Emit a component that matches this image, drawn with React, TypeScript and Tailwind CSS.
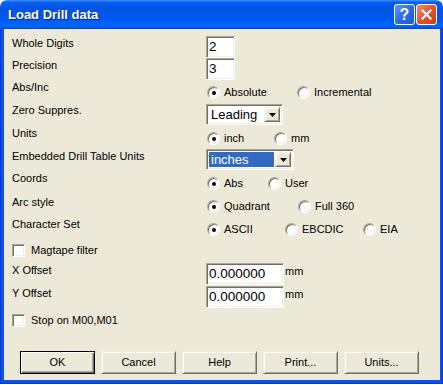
import React from 'react';

const FONT = "font-['Liberation_Sans',Arial,sans-serif]";
const NARROW = "font-['Liberation_Sans_Narrow','Liberation_Sans',Arial,sans-serif]";
const sunken =
  'border border-t-[#ACA899] border-l-[#ACA899] border-b-white border-r-white bg-white shadow-[inset_1px_1px_0_#716F64,inset_-1px_-1px_0_#F1EFE2]';
const raised =
  'border border-t-[#F1EFE2] border-l-[#F1EFE2] border-r-[#716F64] border-b-[#716F64] bg-[#ECE9D8] shadow-[inset_1px_1px_0_#fff,inset_-1px_-1px_0_#ACA899]';

interface RowProps {
  label?: string;
  h: string;
  lt: string;
  ct: string;
  children?: React.ReactNode;
}

const Row: React.FC<RowProps> = ({ label, h, lt, ct, children }) => (
  <div className={`flex ${h}`}>
    <div className={`w-[202px] shrink-0 pl-[8px] leading-[13px] ${lt}`}>{label}</div>
    <div className={`flex items-start ${ct}`}>{children}</div>
  </div>
);

const Edit: React.FC<{ value: string; w: string; h: string }> = ({ value, w, h }) => (
  <div className={`${sunken} ${w} ${h} ${NARROW} flex items-center pl-[2px] text-[13.5px] text-black`}>
    {value}
  </div>
);

const Arrow: React.FC = () => (
  <div className={`${raised} flex h-full w-[16px] shrink-0 items-center justify-center`}>
    <svg width="7" height="4" viewBox="0 0 7 4">
      <path d="M0 0h7L3.5 4z" fill="#000" />
    </svg>
  </div>
);

const Radio: React.FC<{ label: string; checked?: boolean; w?: string }> = ({ label, checked, w }) => (
  <div className={`flex h-[13px] items-center gap-[4px] leading-[13px] ${w ?? ''}`}>
    <div className="flex h-[13px] w-[13px] shrink-0 items-center justify-center rounded-full border border-t-[#ACA899] border-l-[#ACA899] border-r-white border-b-white bg-white shadow-[inset_1px_1px_0_#716F64,inset_-1px_-1px_0_#F1EFE2]">
      {checked && <div className="h-[4px] w-[4px] rounded-full bg-black" />}
    </div>
    <span>{label}</span>
  </div>
);

const Check: React.FC<{ label: string }> = ({ label }) => (
  <div className="flex h-[13px] items-center gap-[6px] pl-[8px] leading-[13px]">
    <div className={`${sunken} h-[13px] w-[13px] shrink-0`} />
    <span>{label}</span>
  </div>
);

const Button: React.FC<{ label: string; primary?: boolean }> = ({ label, primary }) =>
  primary ? (
    <div className="h-[23px] w-[75px] border border-black">
      <div className="flex h-full w-full items-center justify-center bg-[#ECE9D8] shadow-[inset_1px_1px_0_#fff,inset_-1px_-1px_0_#716F64,inset_-2px_-2px_0_#ACA899]">
        {label}
      </div>
    </div>
  ) : (
    <div className={`${raised} flex h-[23px] w-[75px] items-center justify-center`}>{label}</div>
  );

export default function App() {
  return (
    <div className={`h-[385px] w-[443px] overflow-hidden bg-white text-[11px] text-black ${FONT}`}>
      <div className="flex h-[384px] w-[443px] flex-col overflow-hidden rounded-t-[7px]">
        {/* title bar */}
        <div className="flex h-[29px] shrink-0 items-center justify-between bg-[linear-gradient(180deg,#3D95FF_0%,#0A5FF0_8%,#0055E5_30%,#0058EE_65%,#0066FF_88%,#0060F8_94%,#003DD7_100%)] pl-[8px] pr-[6px]">
          <span className="pt-[1px] text-[13px] font-bold text-white [text-shadow:1px_1px_0_#0A1E8A]">
            Load Drill data
          </span>
          <div className="flex gap-[1px]">
            <div className="flex h-[21px] w-[21px] items-center justify-center rounded-[3px] border border-white bg-[linear-gradient(135deg,#5C9BFF_0%,#2E6BE8_50%,#1F55D4_100%)] text-[16px] leading-none font-bold text-white">
              ?
            </div>
            <div className="flex h-[21px] w-[21px] items-center justify-center rounded-[3px] border border-white bg-[linear-gradient(135deg,#F08C6C_0%,#E0552E_50%,#C83E17_100%)]">
              <svg width="11" height="11" viewBox="0 0 11 11">
                <path d="M1.5 1.5l8 8M9.5 1.5l-8 8" stroke="#fff" strokeWidth="2.2" strokeLinecap="square" />
              </svg>
            </div>
          </div>
        </div>

        {/* frame + client */}
        <div className="flex flex-1 bg-[#0B53E4] pb-[4px] pl-[4px] pr-[3px] shadow-[inset_1px_0_0_#0831D9,inset_-1px_0_0_#0831D9,inset_0_-1px_0_#0831D9]">
          <div className="flex flex-1 flex-col bg-[#ECE9D8] pt-[7px]">
            <Row label="Whole Digits" h="h-[22px]" lt="pt-[1px]" ct="pt-0">
              <Edit value="2" w="w-[29px]" h="h-[22px]" />
            </Row>
            <Row label="Precision" h="h-[22px]" lt="pt-[1px]" ct="pt-0">
              <Edit value="3" w="w-[29px]" h="h-[22px]" />
            </Row>
            <Row label="Abs/Inc" h="h-[24px]" lt="pt-[1px]" ct="pt-[6px] pl-[1px]">
              <Radio label="Absolute" checked w="w-[90px]" />
              <Radio label="Incremental" />
            </Row>
            <Row label="Zero Suppres." h="h-[23px]" lt="pt-0" ct="pt-0">
              <div className={`${sunken} flex h-[21px] w-[77px] p-[2px]`}>
                <div className={`flex flex-1 items-center pl-[2px] text-[13px] ${NARROW}`}>Leading</div>
                <Arrow />
              </div>
            </Row>
            <Row label="Units" h="h-[22px]" lt="pt-0" ct="pt-[5px] pl-[1px]">
              <Radio label="inch" checked w="w-[67px]" />
              <Radio label="mm" />
            </Row>
            <Row label="Embedded Drill Table Units" h="h-[23px]" lt="pt-[1px]" ct="pt-0">
              <div className={`${sunken} flex h-[21px] w-[88px] p-[2px]`}>
                <div className={`mr-[1px] flex flex-1 items-center bg-[#316AC5] pl-[2px] text-[13px] text-white ${NARROW}`}>
                  inches
                </div>
                <Arrow />
              </div>
            </Row>
            <Row label="Coords" h="h-[23px]" lt="pt-0" ct="pt-[5px] pl-[1px]">
              <Radio label="Abs" checked w="w-[61px]" />
              <Radio label="User" />
            </Row>
            <Row label="Arc style" h="h-[23px]" lt="pt-[1px]" ct="pt-[5px] pl-[1px]">
              <Radio label="Quadrant" checked w="w-[91px]" />
              <Radio label="Full 360" />
            </Row>
            <Row label="Character Set" h="h-[26px]" lt="pt-0" ct="pt-[5px] pl-[1px]">
              <Radio label="ASCII" checked w="w-[78px]" />
              <Radio label="EBCDIC" w="w-[78px]" />
              <Radio label="EIA" />
            </Row>
            <div className="h-[19px]">
              <Check label="Magtape filter" />
            </div>
            <Row label="X Offset" h="h-[23px]" lt="pt-[1px]" ct="pt-0">
              <Edit value="0.000000" w="w-[78px]" h="h-[22px]" />
              <span className="pl-[1px] pt-[2px] leading-[13px]">mm</span>
            </Row>
            <Row label="Y Offset" h="h-[28px]" lt="pt-[1px]" ct="pt-0">
              <Edit value="0.000000" w="w-[78px]" h="h-[22px]" />
              <span className="pl-[1px] pt-[2px] leading-[13px]">mm</span>
            </Row>
            <Check label="Stop on M00,M01" />

            <div className="mt-[24px] flex gap-[6px] pl-[16px]">
              <Button label="OK" primary />
              <Button label="Cancel" />
              <Button label="Help" />
              <Button label="Print..." />
              <Button label="Units..." />
            </div>
          </div>
        </div>
      </div>
    </div>
  );
}
